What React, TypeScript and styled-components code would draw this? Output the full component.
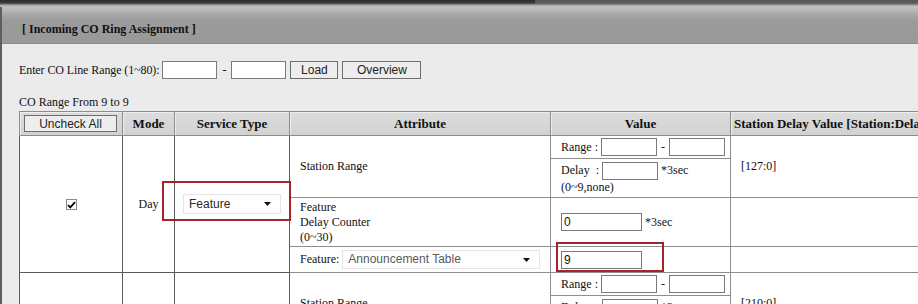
import React from "react";
import styled, { createGlobalStyle } from "styled-components";

const GlobalStyle = createGlobalStyle`
  html, body {
    margin: 0;
    padding: 0;
    overflow: hidden;
  }
  body {
    width: 918px;
    height: 304px;
    background: #ebebeb;
    font-family: "Liberation Serif", "Times New Roman", serif;
    font-size: 12px;
    color: #111;
  }
`;

const TopStrip = styled.div`
  display: flex;
  height: 7px;
`;

const StripSeg = styled.div<{ $w?: number; $dark?: boolean }>`
  flex: ${(p) => (p.$w ? `0 0 ${p.$w}px` : "1")};
  background: linear-gradient(
    to bottom,
    ${(p) => (p.$dark ? "#2e2e2e" : "#575757")} 0,
    ${(p) => (p.$dark ? "#3a3a3a" : "#5c5c5c")} 3px,
    #6f6f6f 4px,
    #9a9a9a 5px,
    #bcbcbc 6px
  );
`;

const Panel = styled.div`
  border-left: 2px solid #5e5e5e;
  min-height: 297px;
`;

const TitleBar = styled.div`
  height: 37px;
  box-sizing: border-box;
  padding: 15px 0 0 20px;
  background: linear-gradient(
    to bottom,
    #c2c2c2 0,
    #b9b9b9 3px,
    #a6a6a6 8px,
    #9b9b9b 14px,
    #999999 100%
  );
  border-bottom: 1px solid #8c8c8c;
  font-weight: bold;
  font-size: 12px;
  color: #101010;
`;

const Content = styled.div`
  padding: 17px 0 0 17px;
`;

const FormRow = styled.div`
  display: flex;
  align-items: center;
  height: 18px;
  gap: 4px;
`;

const FieldLabel = styled.span`
  margin-right: -1px;
  letter-spacing: -0.1px;
`;

const TextBox = styled.input<{ $w: number }>`
  box-sizing: border-box;
  width: ${(p) => p.$w}px;
  height: 18px;
  margin: 0;
  padding: 0 2px;
  border: 1px solid #7a7a7a;
  background: #fff;
  font-family: "Liberation Sans", Arial, sans-serif;
  font-size: 12px;
  color: #111;
  outline: none;
`;

const Dash = styled.span`
  padding: 0 1px;
`;

const Button = styled.button<{ $w: number; $h?: number }>`
  box-sizing: border-box;
  width: ${(p) => p.$w}px;
  height: ${(p) => p.$h ?? 18}px;
  margin: 0;
  padding: 0;
  border: 1px solid #6e6e6e;
  background: #ededed;
  font-family: "Liberation Sans", Arial, sans-serif;
  font-size: 12px;
  color: #222;
`;

const RangeNote = styled.div`
  margin-top: 16px;
  line-height: 14px;
`;

const TableWrap = styled.div`
  position: relative;
  margin-top: 2px;
`;

const Grid = styled.table`
  border-collapse: collapse;
  table-layout: fixed;
  width: 937px;
  background: #fff;
  border: 1px solid #808080;
`;

const Row = styled.tr<{ $h: number }>`
  height: ${(p) => p.$h}px;
`;

const HeadCell = styled.th<{ $left?: boolean }>`
  padding: 0 0 0 ${(p) => (p.$left ? 3 : 0)}px;
  background: linear-gradient(to bottom, #dcdcdc, #d1d1d1);
  border: 1px solid #8c8c8c;
  box-shadow: inset 1px 1px 0 #eeeeee;
  font-weight: bold;
  font-size: 13px;
  text-align: ${(p) => (p.$left ? "left" : "center")};
  white-space: nowrap;
  overflow: hidden;
  vertical-align: middle;
`;

const HeadButtonCell = styled(HeadCell)`
  text-align: left;
  padding: 0 0 0 4px;
`;

const Cell = styled.td<{ $center?: boolean; $dark?: boolean }>`
  padding: 0 ${(p) => (p.$center ? 0 : 10)}px;
  border: 1px solid ${(p) => (p.$dark ? "#5a5a5a" : "#8e8e8e")};
  text-align: ${(p) => (p.$center ? "center" : "left")};
  vertical-align: middle;
  white-space: nowrap;
  line-height: 15px;
`;

const InlineRow = styled.div`
  display: flex;
  align-items: center;
  gap: 3px;
`;

const CheckBox = styled.span`
  display: inline-flex;
  align-items: center;
  justify-content: center;
  width: 11px;
  height: 11px;
  box-sizing: border-box;
  border: 1px solid #8a8a8a;
  background: #fff;
  vertical-align: middle;
`;

const FakeSelect = styled.div<{ $w: number; $h: number; $muted?: boolean }>`
  display: inline-flex;
  align-items: center;
  justify-content: space-between;
  box-sizing: border-box;
  width: ${(p) => p.$w}px;
  height: ${(p) => p.$h}px;
  padding: 0 9px 0 5px;
  border: 1px solid #e6e6e6;
  background: #fff;
  font-family: "Liberation Sans", Arial, sans-serif;
  font-size: 12px;
  color: ${(p) => (p.$muted ? "#5a5a5a" : "#2a2a2a")};
  vertical-align: middle;
`;

const SelectRow = styled.div`
  display: flex;
  align-items: center;
  gap: 3px;
`;

const Highlight = styled.div<{ $x: number; $y: number; $w: number; $h: number }>`
  position: absolute;
  left: ${(p) => p.$x}px;
  top: ${(p) => p.$y}px;
  width: ${(p) => p.$w}px;
  height: ${(p) => p.$h}px;
  box-sizing: border-box;
  border: 2px solid #a4232b;
  pointer-events: none;
`;

const Caret = () => (
  <svg width="7" height="4" viewBox="0 0 7 4">
    <path d="M0 0 H7 L3.5 4 Z" fill="#111" />
  </svg>
);

const Tick = () => (
  <svg width="9" height="8" viewBox="0 0 9 8">
    <path d="M1 4 L3.3 6.4 L8 1.2" stroke="#000" strokeWidth="1.8" fill="none" />
  </svg>
);

type Block = { station: string; checked: boolean };

const blocks: Block[] = [
  { station: "[127:0]", checked: true },
  { station: "[210:0]", checked: false },
];

function RingBlock({ station, checked }: Block) {
  return (
    <>
      <Row $h={23}>
        <Cell $center $dark rowSpan={4}>
          {checked && (
            <CheckBox>
              <Tick />
            </CheckBox>
          )}
        </Cell>
        <Cell $center $dark rowSpan={4}>
          Day
        </Cell>
        <Cell $center $dark rowSpan={4}>
          <FakeSelect $w={98} $h={20}>
            Feature
            <Caret />
          </FakeSelect>
        </Cell>
        <Cell rowSpan={2}>Station Range</Cell>
        <Cell>
          <InlineRow>
            Range :
            <TextBox $w={56} />
            <Dash>-</Dash>
            <TextBox $w={56} />
          </InlineRow>
        </Cell>
        <Cell rowSpan={2}>{station}</Cell>
      </Row>
      <Row $h={39}>
        <Cell>
          <InlineRow>
            Delay&nbsp;&nbsp;:
            <TextBox $w={56} />
            <span>*3sec</span>
          </InlineRow>
          <div>(0~9,none)</div>
        </Cell>
      </Row>
      <Row $h={49}>
        <Cell>
          Feature
          <br />
          Delay Counter
          <br />
          (0~30)
        </Cell>
        <Cell>
          <InlineRow>
            <TextBox $w={81} defaultValue="0" />
            <span>*3sec</span>
          </InlineRow>
        </Cell>
        <Cell />
      </Row>
      <Row $h={26}>
        <Cell>
          <SelectRow>
            Feature:
            <FakeSelect $w={199} $h={19} $muted>
              Announcement Table
              <Caret />
            </FakeSelect>
          </SelectRow>
        </Cell>
        <Cell>
          <TextBox $w={81} defaultValue="9" />
        </Cell>
        <Cell />
      </Row>
    </>
  );
}

export default function App() {
  return (
    <>
      <GlobalStyle />
      <TopStrip>
        <StripSeg $w={535} $dark />
        <StripSeg />
      </TopStrip>
      <Panel>
        <TitleBar>[ Incoming CO Ring Assignment ]</TitleBar>
        <Content>
          <FormRow>
            <FieldLabel>Enter CO Line Range (1~80):</FieldLabel>
            <TextBox $w={55} />
            <Dash>-</Dash>
            <TextBox $w={55} />
            <Button $w={48}>Load</Button>
            <Button $w={79}>Overview</Button>
          </FormRow>
          <RangeNote>CO Range From 9 to 9</RangeNote>
          <TableWrap>
            <Grid>
              <colgroup>
                <col style={{ width: 103 }} />
                <col style={{ width: 52 }} />
                <col style={{ width: 115 }} />
                <col style={{ width: 261 }} />
                <col style={{ width: 180 }} />
                <col style={{ width: 225 }} />
              </colgroup>
              <thead>
                <Row $h={24}>
                  <HeadButtonCell>
                    <Button $w={93} $h={17}>
                      Uncheck All
                    </Button>
                  </HeadButtonCell>
                  <HeadCell>Mode</HeadCell>
                  <HeadCell>Service Type</HeadCell>
                  <HeadCell>Attribute</HeadCell>
                  <HeadCell>Value</HeadCell>
                  <HeadCell $left>Station Delay Value [Station:Delay]</HeadCell>
                </Row>
              </thead>
              <tbody>
                {blocks.map((b) => (
                  <RingBlock key={b.station} {...b} />
                ))}
              </tbody>
            </Grid>
            <Highlight $x={143} $y={70} $w={129} $h={40} />
            <Highlight $x={537} $y={131} $w={108} $h={30} />
          </TableWrap>
        </Content>
      </Panel>
    </>
  );
}
